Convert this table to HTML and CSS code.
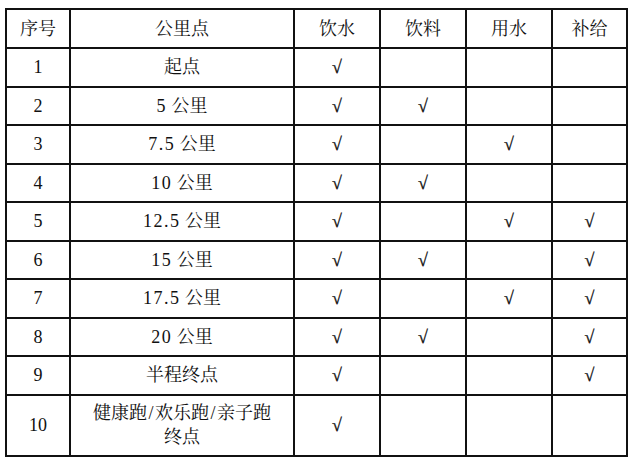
FILE: index.html
```html
<!DOCTYPE html>
<html lang="zh-CN">
<head>
<meta charset="utf-8">
<title>补给站</title>
<link rel="stylesheet" href="styles.css">
</head>
<body>
<table class="supply">
  <colgroup>
    <col class="c-no"><col class="c-km"><col class="c-w"><col class="c-w"><col class="c-w"><col class="c-last">
  </colgroup>
  <thead>
    <tr class="head"><th>序号</th><th>公里点</th><th>饮水</th><th>饮料</th><th>用水</th><th>补给</th></tr>
  </thead>
  <tbody>
    <tr><td class="num">1</td><td>起点</td><td class="ck">√</td><td></td><td></td><td></td></tr>
    <tr><td class="num">2</td><td><span class="km">5</span> 公里</td><td class="ck">√</td><td class="ck">√</td><td></td><td></td></tr>
    <tr><td class="num">3</td><td><span class="km">7.5</span> 公里</td><td class="ck">√</td><td></td><td class="ck">√</td><td></td></tr>
    <tr><td class="num">4</td><td><span class="km">10</span> 公里</td><td class="ck">√</td><td class="ck">√</td><td></td><td></td></tr>
    <tr><td class="num">5</td><td><span class="km">12.5</span> 公里</td><td class="ck">√</td><td></td><td class="ck">√</td><td class="ck">√</td></tr>
    <tr><td class="num">6</td><td><span class="km">15</span> 公里</td><td class="ck">√</td><td class="ck">√</td><td></td><td class="ck">√</td></tr>
    <tr><td class="num">7</td><td><span class="km">17.5</span> 公里</td><td class="ck">√</td><td></td><td class="ck">√</td><td class="ck">√</td></tr>
    <tr><td class="num">8</td><td><span class="km">20</span> 公里</td><td class="ck">√</td><td class="ck">√</td><td></td><td class="ck">√</td></tr>
    <tr><td class="num">9</td><td>半程终点</td><td class="ck">√</td><td></td><td></td><td class="ck">√</td></tr>
    <tr class="tall"><td class="num">10</td><td>健康跑<span class="sl">/</span>欢乐跑<span class="sl">/</span>亲子跑<br>终点</td><td class="ck">√</td><td></td><td></td><td></td></tr>
  </tbody>
</table>
</body>
</html>
```

FILE: styles.css
```css
html, body {
  margin: 0;
  padding: 0;
  background: #ffffff;
}

body {
  font-family: "Liberation Serif", "Noto Serif CJK SC", "Noto Sans CJK SC", serif;
  color: #111111;
}

.supply {
  margin: 8px 0 0 5px;
  border-collapse: separate;
  border-spacing: 0;
  border-left: 2px solid #111;
  border-top: 2px solid #111;
  table-layout: fixed;
  width: 623px;
}

.c-no { width: 64px; }
.c-km { width: 224px; }
.c-w { width: 86px; }
.c-last { width: 75px; }

.supply th,
.supply td {
  border-right: 2px solid #111;
  border-bottom: 2px solid #111;
  padding: 0;
  text-align: center;
  vertical-align: middle;
  font-weight: normal;
  font-size: 18px;
  line-height: 24px;
  box-sizing: border-box;
  height: 38.5px;
}

.supply .head th {
  height: 39px;
}

.supply .tall td {
  height: 61.5px;
}

.num {
  font-family: "Liberation Serif", serif;
}

.km {
  font-family: "Liberation Serif", serif;
  letter-spacing: 1.5px;
}

.sl {
  margin: 0 1.5px;
}

.ck {
  font-family: "Liberation Serif", "DejaVu Sans", serif;
  font-size: 18px;
  -webkit-text-stroke: 0.3px #111;
}
```
